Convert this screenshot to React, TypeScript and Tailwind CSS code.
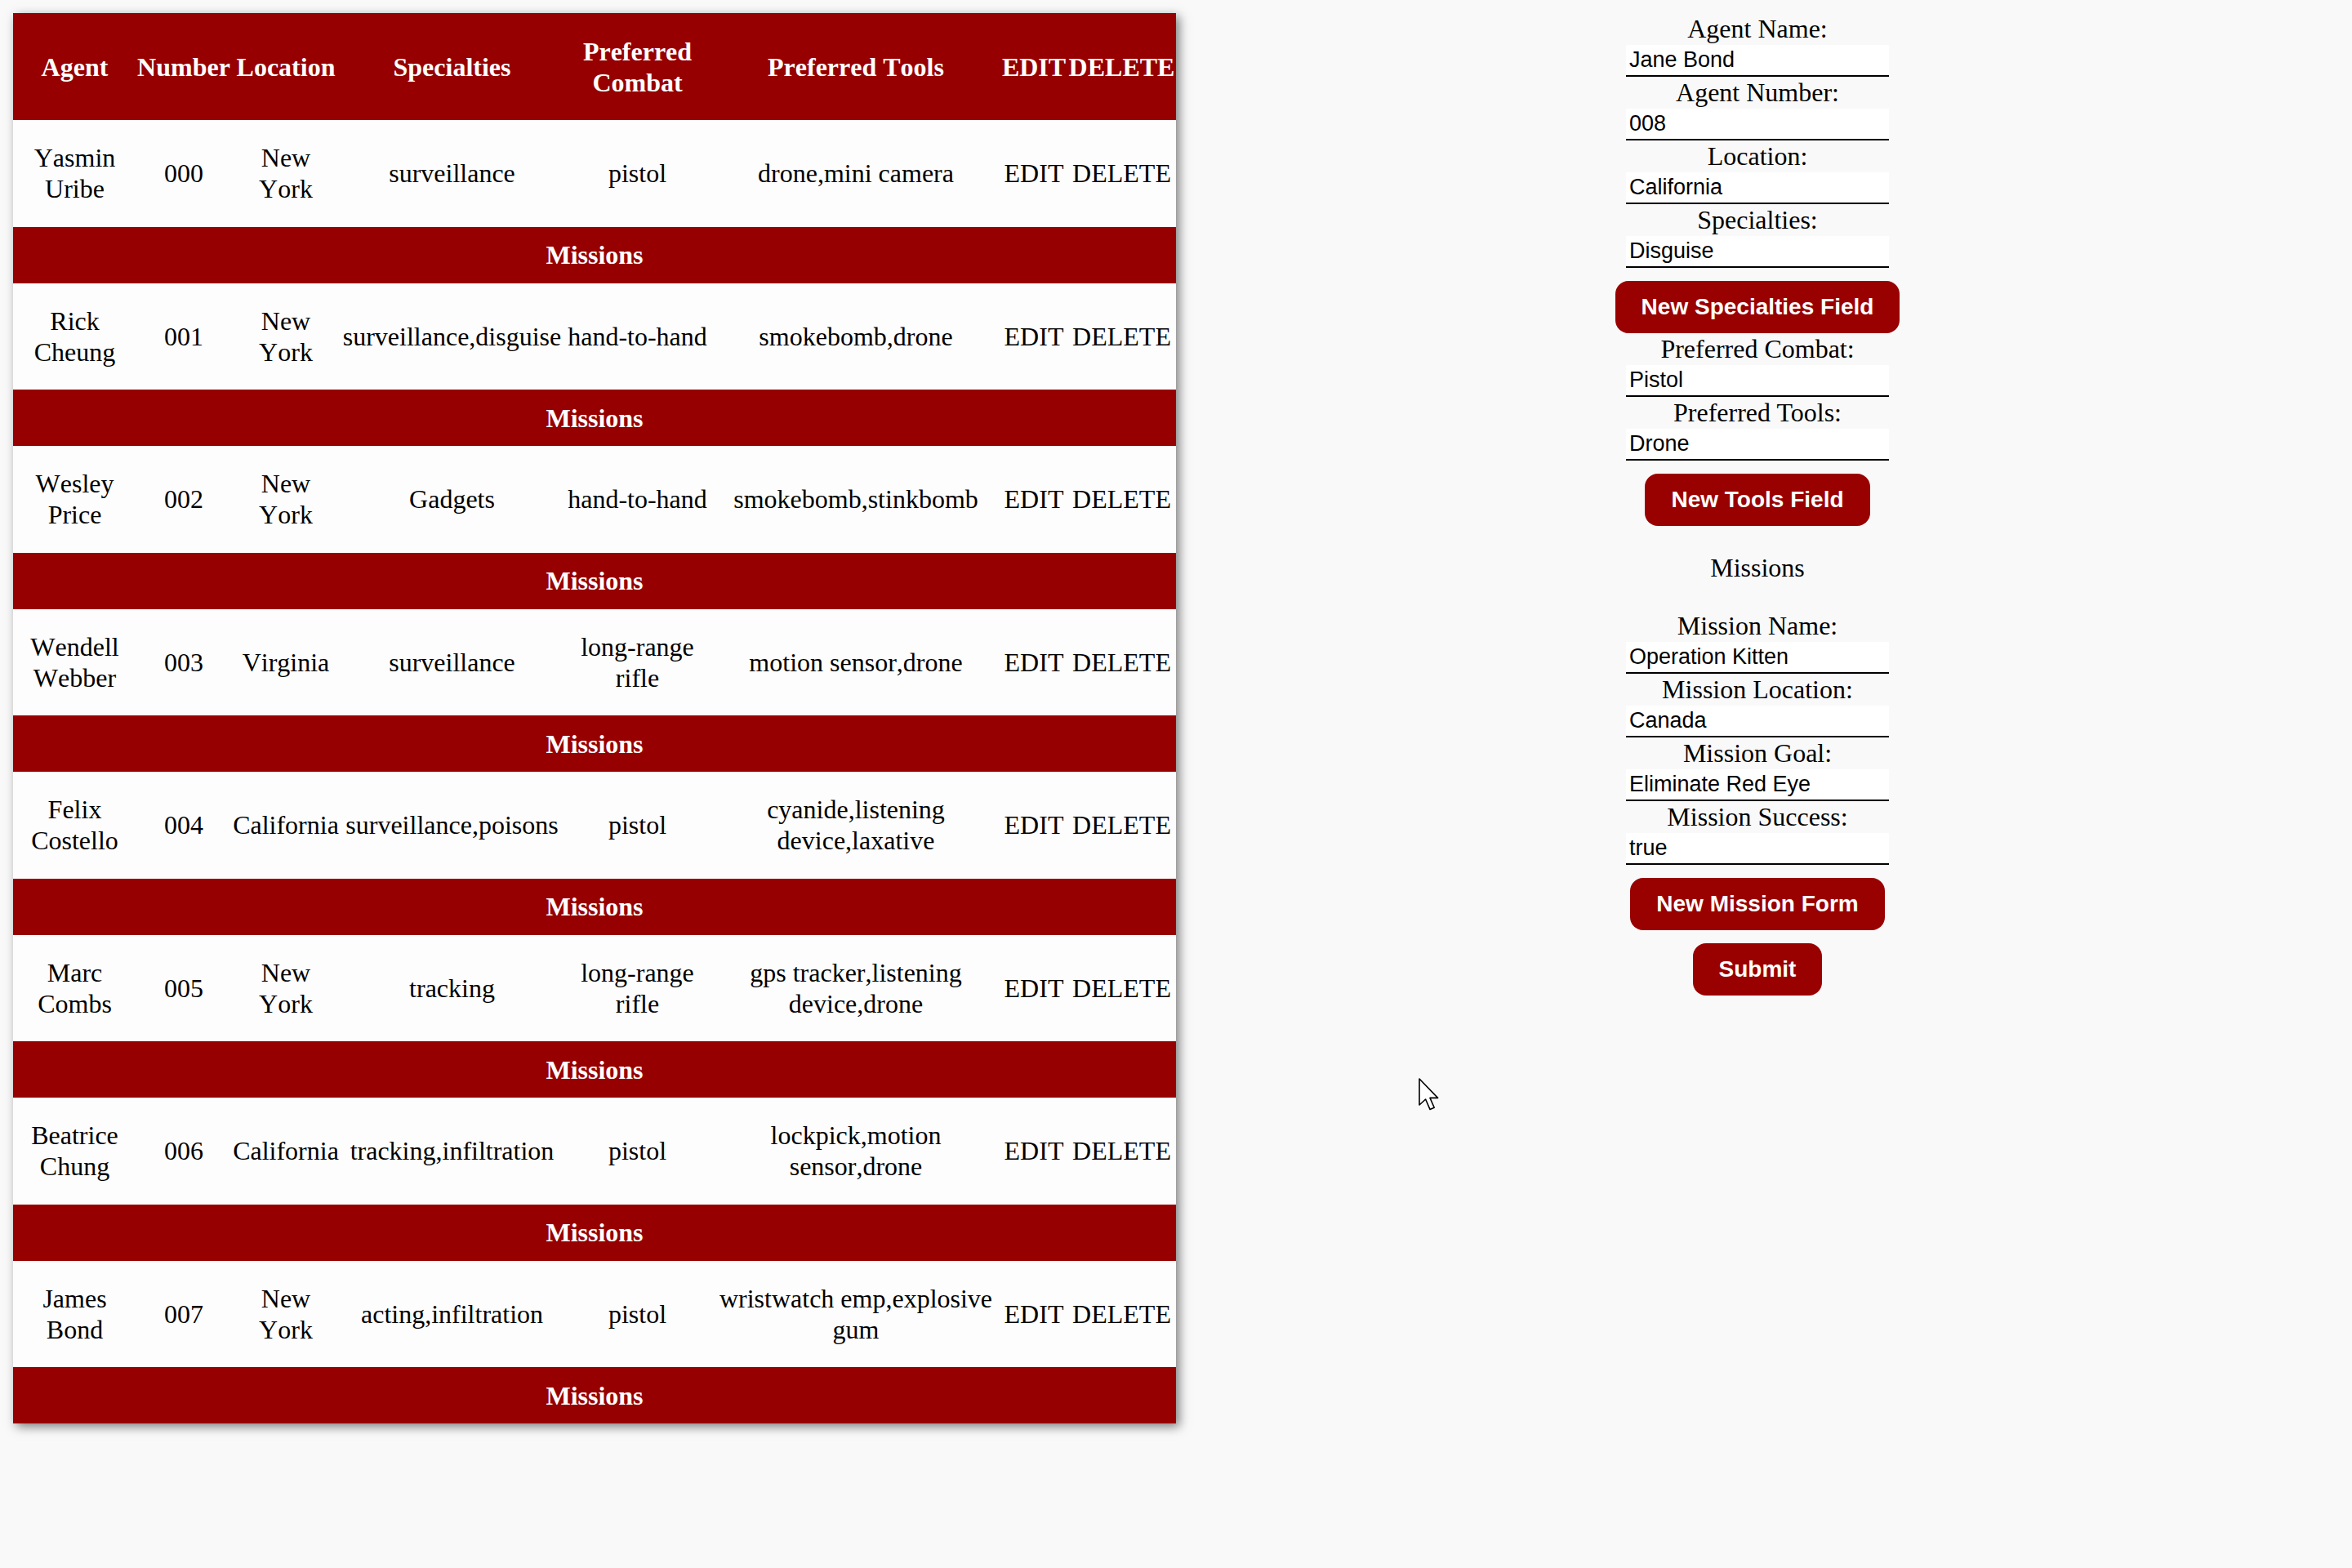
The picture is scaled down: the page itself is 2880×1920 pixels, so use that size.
import React from 'react';

interface Agent {
  name: string;
  number: string;
  location: string;
  specialties: string;
  combat: string;
  tools: string;
}

const AGENTS: Agent[] = [
  { name: 'Yasmin Uribe', number: '000', location: 'New York', specialties: 'surveillance', combat: 'pistol', tools: 'drone,mini camera' },
  { name: 'Rick Cheung', number: '001', location: 'New York', specialties: 'surveillance,disguise', combat: 'hand-to-hand', tools: 'smokebomb,drone' },
  { name: 'Wesley Price', number: '002', location: 'New York', specialties: 'Gadgets', combat: 'hand-to-hand', tools: 'smokebomb,stinkbomb' },
  { name: 'Wendell Webber', number: '003', location: 'Virginia', specialties: 'surveillance', combat: 'long-range rifle', tools: 'motion sensor,drone' },
  { name: 'Felix Costello', number: '004', location: 'California', specialties: 'surveillance,poisons', combat: 'pistol', tools: 'cyanide,listening device,laxative' },
  { name: 'Marc Combs', number: '005', location: 'New York', specialties: 'tracking', combat: 'long-range rifle', tools: 'gps tracker,listening device,drone' },
  { name: 'Beatrice Chung', number: '006', location: 'California', specialties: 'tracking,infiltration', combat: 'pistol', tools: 'lockpick,motion sensor,drone' },
  { name: 'James Bond', number: '007', location: 'New York', specialties: 'acting,infiltration', combat: 'pistol', tools: 'wristwatch emp,explosive gum' },
];

const COLUMNS = ['Agent', 'Number', 'Location', 'Specialties', 'Preferred Combat', 'Preferred Tools', 'EDIT', 'DELETE'];

const cell = 'px-[1px] py-0 text-center align-middle';

const AgentTable: React.FC = () => (
  <table className="table-fixed w-[1424px] shrink-0 text-[32px] leading-[38px] [font-kerning:none] font-['Liberation_Serif','Times_New_Roman',serif] text-black shadow-[4px_4px_12px_rgba(0,0,0,0.5)]">
    <colgroup>
      <col className="w-[151px]" />
      <col className="w-[116px]" />
      <col className="w-[134px]" />
      <col className="w-[273px]" />
      <col className="w-[181px]" />
      <col className="w-[354px]" />
      <col className="w-[82px]" />
      <col className="w-[133px]" />
    </colgroup>
    <thead>
      <tr className="h-[131px] bg-[#960000] text-white">
        {COLUMNS.map((c) => (
          <th key={c} className={`${cell} font-bold`}>
            {c}
          </th>
        ))}
      </tr>
    </thead>
    <tbody>
      {AGENTS.map((a) => (
        <React.Fragment key={a.number}>
          <tr className="h-[130.5px] bg-[#fdfdfd]">
            <td className={cell}>{a.name}</td>
            <td className={cell}>{a.number}</td>
            <td className={cell}>{a.location}</td>
            <td className={cell}>{a.specialties}</td>
            <td className={cell}>{a.combat}</td>
            <td className={cell}>{a.tools}</td>
            <td className={cell}>EDIT</td>
            <td className={cell}>DELETE</td>
          </tr>
          <tr className="h-[69px] bg-[#960000] text-white">
            <td colSpan={8} className={`${cell} font-bold`}>
              Missions
            </td>
          </tr>
        </React.Fragment>
      ))}
    </tbody>
  </table>
);

const Field: React.FC<{ label: string; value: string }> = ({ label, value }) => (
  <>
    <label className="h-[39px] leading-[39px] text-[32px] font-['Liberation_Serif','Times_New_Roman',serif] text-black text-center">
      {label}
    </label>
    <input
      readOnly
      value={value}
      className="w-[322px] h-[39px] bg-white border-b-2 border-black pl-1 text-[27px] font-['Liberation_Sans',Arial,sans-serif] text-black outline-none"
    />
  </>
);

const RedButton: React.FC<{ children: React.ReactNode }> = ({ children }) => (
  <button className="mt-4 h-[64px] px-8 rounded-[16px] bg-[#990000] text-white text-[28px] font-bold font-['Liberation_Sans',Arial,sans-serif]">
    {children}
  </button>
);

const AgentForm: React.FC = () => (
  <div className="flex-1 flex flex-col items-center">
    <Field label="Agent Name:" value="Jane Bond" />
    <Field label="Agent Number:" value="008" />
    <Field label="Location:" value="California" />
    <Field label="Specialties:" value="Disguise" />
    <RedButton>New Specialties Field</RedButton>
    <Field label="Preferred Combat:" value="Pistol" />
    <Field label="Preferred Tools:" value="Drone" />
    <RedButton>New Tools Field</RedButton>
    <p className="my-8 h-[39px] leading-[39px] text-[32px] font-['Liberation_Serif','Times_New_Roman',serif] text-black">
      Missions
    </p>
    <Field label="Mission Name:" value="Operation Kitten" />
    <Field label="Mission Location:" value="Canada" />
    <Field label="Mission Goal:" value="Eliminate Red Eye" />
    <Field label="Mission Success:" value="true" />
    <RedButton>New Mission Form</RedButton>
    <RedButton>Submit</RedButton>
  </div>
);

export default function App() {
  return (
    <div className="relative min-h-screen bg-[#f9f9f9] p-4 flex items-start">
      <AgentTable />
      <AgentForm />

      {/* mouse pointer left in the capture */}
      <svg className="absolute left-[1737px] top-[1320px]" width="26" height="40" viewBox="0 0 13 20">
        <path d="M0.5 0.5 L0.5 16.5 L4.3 13 L7 19.2 L9.6 18.1 L7 12.2 L11.8 12.2 Z" fill="#fff" stroke="#000" strokeWidth="0.8" strokeLinejoin="round" />
      </svg>
    </div>
  );
}
